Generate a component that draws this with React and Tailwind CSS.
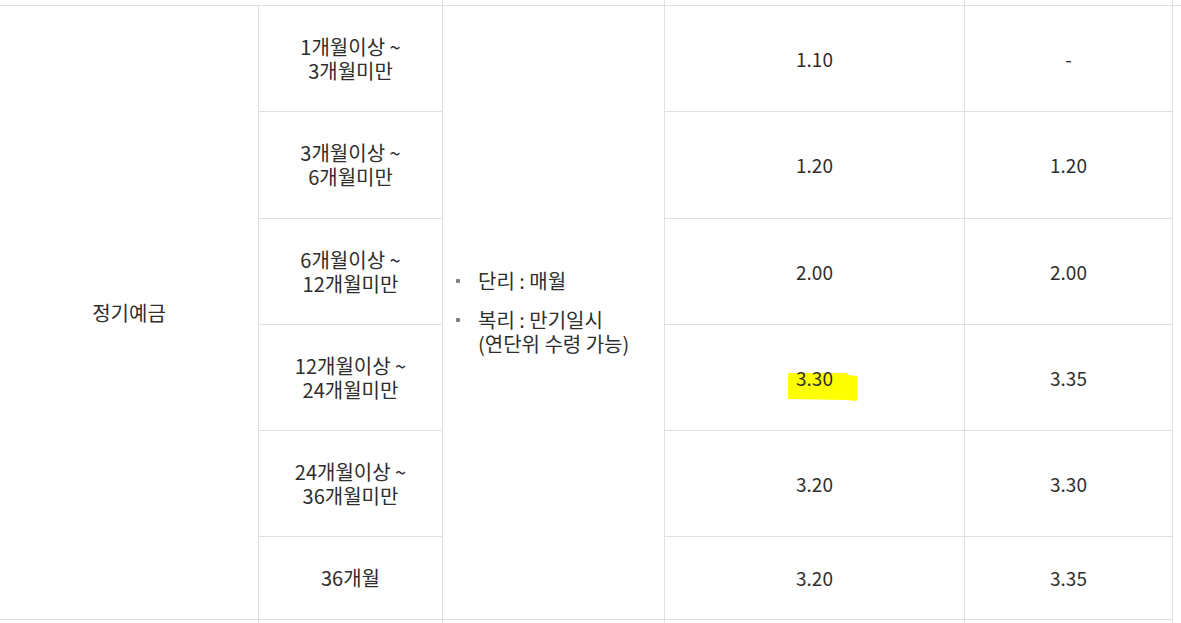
const rows = [
  { term: ["1개월이상 ~", "3개월미만"], rate: "1.10", extra: "-" },
  { term: ["3개월이상 ~", "6개월미만"], rate: "1.20", extra: "1.20" },
  { term: ["6개월이상 ~", "12개월미만"], rate: "2.00", extra: "2.00" },
  { term: ["12개월이상 ~", "24개월미만"], rate: "3.30", extra: "3.35", mark: true },
  { term: ["24개월이상 ~", "36개월미만"], rate: "3.20", extra: "3.30" },
  { term: ["36개월"], rate: "3.20", extra: "3.35" },
];

const line = "border-[#e0e0e0]";

function Highlight({ children }) {
  return (
    <span className="relative inline-block">
      <svg className="absolute left-[-8px] top-0 w-[72px] h-[40px]" viewBox="0 0 72 40">
        <polygon points="0,7 59,7 60,9 69,10 69,35 59,34 0,33" fill="#ffff00" />
      </svg>
      <span className="relative">{children}</span>
    </span>
  );
}

export default function App() {
  return (
    <div className="w-[1181px] h-[623px] overflow-hidden bg-white text-[#2e2e2e] text-[20px] leading-[24px] font-['Noto_Sans_CJK_KR','Noto_Sans',sans-serif]">
      {/* 위쪽 헤더 끝부분 */}
      <div className={`flex h-[6px] border-b ${line}`}>
        <div className={`w-[443px] border-r ${line}`} />
        <div className={`w-[222px] border-r ${line}`} />
        <div className={`w-[300px] border-r ${line}`} />
        <div className={`w-[208px] border-r ${line}`} />
      </div>

      <div className="grid w-[1173px] grid-cols-[259px_184px_222px_300px_208px] grid-rows-[106px_107px_106px_106px_106px_83px]">
        <div className={`row-span-6 flex items-center justify-center border-r border-b ${line}`}>
          정기예금
        </div>

        {rows.map((r, i) => (
          <div key={i} className="contents">
            <div
              className={`col-start-2 flex flex-col items-center justify-center text-center border-r border-b ${line}`}
              style={{ gridRow: i + 1 }}
            >
              {r.term.map((t) => (
                <span key={t} className="block h-[24px]">{t}</span>
              ))}
            </div>
            <div
              className={`col-start-4 flex items-center justify-center text-[19px] border-r border-b ${line}`}
              style={{ gridRow: i + 1 }}
            >
              {r.mark ? <Highlight>{r.rate}</Highlight> : r.rate}
            </div>
            <div
              className={`col-start-5 flex items-center justify-center text-[19px] border-r border-b ${line}`}
              style={{ gridRow: i + 1 }}
            >
              {r.extra}
            </div>
          </div>
        ))}

        <div className={`col-start-3 row-start-1 row-span-6 flex items-center pl-[13px] border-r border-b ${line}`}>
          <ul className="flex flex-col gap-[15px]">
            <li className="flex">
              <span className="w-[22px] flex justify-start pt-[10px]">
                <span className="block w-[4px] h-[4px] rounded-[1px] bg-[#808080]" />
              </span>
              <span>단리 : 매월</span>
            </li>
            <li className="flex">
              <span className="w-[22px] flex justify-start pt-[10px]">
                <span className="block w-[4px] h-[4px] rounded-[1px] bg-[#808080]" />
              </span>
              <span>
                복리 : 만기일시
                <br />
                (연단위 수령 가능)
              </span>
            </li>
          </ul>
        </div>
      </div>

      {/* 아래 다음 행 시작 */}
      <div className="flex h-[3px]">
        <div className={`w-[259px] border-r ${line}`} />
        <div className={`w-[184px] border-r ${line}`} />
        <div className={`w-[222px] border-r ${line}`} />
        <div className={`w-[300px] border-r ${line}`} />
        <div className={`w-[208px] border-r ${line}`} />
      </div>
    </div>
  );
}
